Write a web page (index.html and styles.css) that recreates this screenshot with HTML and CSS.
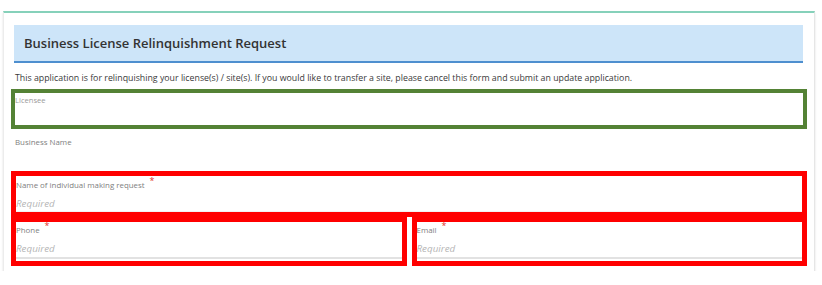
FILE: index.html
```html
<!DOCTYPE html>
<html>
<head>
<meta charset="utf-8">
<link rel="stylesheet" href="styles.css">
</head>
<body>
<div class="card">
  <div class="header"><h1 class="title">Business License Relinquishment Request</h1></div>
  <p class="intro">This application is for relinquishing your license(s) / site(s). If you would like to transfer a site, please cancel this form and submit an update application.</p>
  <div class="field field-green">
    <div class="label label-light">Licensee</div>
  </div>
  <div class="field-plain">
    <div class="label">Business Name</div>
  </div>
  <div class="field field-red field-wide">
    <div class="label">Name of individual making request<span class="req">*</span></div>
    <div class="input">Required</div>
  </div>
  <div class="row">
    <div class="field field-red field-half">
      <div class="label">Phone<span class="req">*</span></div>
      <div class="input">Required</div>
    </div>
    <div class="field field-red field-half">
      <div class="label">Email<span class="req">*</span></div>
      <div class="input">Required</div>
    </div>
  </div>
</div>
</body>
</html>
```
FILE: styles.css
```css
html, body {
  margin: 0;
  padding: 0;
  background: #ffffff;
}
body {
  padding: 11px 7px 0 3px;
  font-family: "Open Sans", "Noto Sans", sans-serif;
}
.card {
  border-top: 2px solid #86d1ba;
  border-left: 1px solid #ececec;
  border-right: 1px solid #e6e6e6;
  box-shadow: 0 2px 2px rgba(0,0,0,0.12);
  padding: 12px 7px 5px 7px;
  box-sizing: content-box;
  width: 796px;
}
.header {
  margin: 0 4px 0 3px;
  height: 36px;
  background: #cde5f9;
  border-bottom: 2px solid #4e8fcf;
  display: flex;
  align-items: center;
  padding-left: 10px;
}
.title {
  margin: 0;
  font-size: 13px;
  font-weight: 600;
  color: #333333;
}
.intro {
  margin: 9px 0 5px 4px;
  font-size: 8.8px;
  line-height: 12px;
  color: #3a3a3a;
}
.field {
  box-sizing: border-box;
  overflow: hidden;
}
.field-green {
  border: 4px solid #548235;
  height: 40px;
  padding-top: 1px;
}
.label {
  font-size: 7.9px;
  line-height: 12px;
  color: #808080;
}
.label-light {
  color: #9a9a9a;
  font-size: 7.6px;
}
.field-plain {
  height: 42px;
  padding: 7px 0 0 4px;
  box-sizing: border-box;
}
.field-red {
  border: 5px solid #ff0000;
}
.field-wide {
  height: 46px;
  padding-top: 3px;
}
.req {
  color: #e0302a;
  font-size: 9px;
  position: relative;
  top: -4px;
  margin-left: 5px;
}
.input {
  font-size: 9.8px;
  font-style: italic;
  color: #b5b5b5;
  line-height: 14px;
  margin-top: 6px;
  border-bottom: 1px solid #f2f2f2;
}
.row {
  display: grid;
  grid-template-columns: 1fr 1fr;
  column-gap: 5px;
}
.field-half {
  height: 49px;
  padding-top: 2px;
}
.field-half .input {
  margin-top: 6px;
  padding-bottom: 1px;
  border-bottom: 2px solid #e2e2e2;
}
```
